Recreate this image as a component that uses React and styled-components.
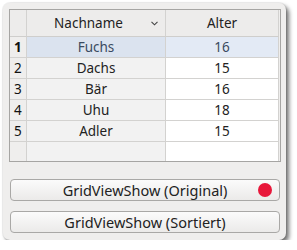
import React from "react";
import styled, { createGlobalStyle } from "styled-components";

const Global = createGlobalStyle`
  html, body { margin: 0; padding: 0; background: #ffffff; }
  body { font-family: "Noto Sans", "DejaVu Sans", sans-serif; }
`;

const Page = styled.div`
  padding: 3px 0 0 3px;
`;

const Window = styled.div`
  width: 283px;
  height: 237px;
  box-sizing: border-box;
  background: #efeeed;
  border-radius: 7px;
  box-shadow: 0 0 0 1px rgba(0,0,0,0.06), 3px 3px 4px rgba(0,0,0,0.55);
  padding: 6px 6px 0 6px;
  display: flex;
  flex-direction: column;
`;

const Table = styled.div`
  width: 272px;
  height: 153px;
  box-sizing: border-box;
  border: 1px solid #a6a5a3;
  background: #f2f1f0;
  display: grid;
  grid-template-columns: 17px 139px 113px 1px;
  grid-template-rows: 27px repeat(5, 21px) 1fr;
`;

const Head = styled.div`
  background: #edeceb;
  border-right: 1px solid #d3d2d0;
  border-bottom: 1px solid #cfcecc;
  display: flex;
  align-items: center;
  justify-content: center;
  position: relative;
  padding-right: ${p => (p.$sort ? "15px" : "0")};
  font-size: 13.5px;
  color: #222;
`;

const Sort = styled.svg`
  position: absolute;
  right: 7px;
  top: 11px;
`;

const RowHead = styled.div`
  background: #efeeed;
  border-right: 1px solid #d3d2d0;
  border-bottom: 1px solid #d3d2d0;
  display: flex;
  align-items: center;
  padding-left: 4px;
  font-size: 13.5px;
  font-weight: ${p => (p.$bold ? 700 : 400)};
  color: #111;
`;

const Cell = styled.div`
  background: ${p => (p.$sel ? (p.$sorted ? "#dbe3ef" : "#e3eaf5") : p.$sorted ? "#f2f2f2" : "#ffffff")};
  border-right: 1px solid #d3d2d0;
  border-bottom: 1px solid #d3d2d0;
  display: flex;
  align-items: center;
  justify-content: center;
  font-size: 13.5px;
  color: ${p => (p.$sel ? "#3a4a60" : "#222")};
`;

const Filler = styled.div`
  background: #efeeed;
`;

const EmptyHead = styled.div`
  background: #efeeed;
  border-right: 1px solid #d3d2d0;
`;

const EmptyCell = styled.div`
  background: ${p => (p.$sorted ? "#f2f2f2" : "#ffffff")};
  border-right: 1px solid #d3d2d0;
`;

const Buttons = styled.div`
  display: flex;
  flex-direction: column;
  gap: 10px;
  margin-top: 17px;
  padding-left: 1px;
`;

const Button = styled.button`
  width: 270px;
  height: 22px;
  box-sizing: border-box;
  border: 1px solid #a9a8a6;
  border-radius: 4px;
  background: linear-gradient(#fbfbfb, #ebeae9);
  font-family: "Noto Sans", "DejaVu Sans", sans-serif;
  font-size: 14.5px;
  color: #222;
  padding: 0;
  position: relative;
  display: flex;
  align-items: center;
  justify-content: center;
`;

const Dot = styled.span`
  position: absolute;
  right: 7px;
  top: 3px;
  width: 14px;
  height: 14px;
  border-radius: 50%;
  background: #e8173a;
`;

const rows = [
  ["Fuchs", 16],
  ["Dachs", 15],
  ["Bär", 16],
  ["Uhu", 18],
  ["Adler", 15],
];

export default function App() {
  return (
    <>
      <Global />
      <Page>
        <Window>
          <Table>
            <Head />
            <Head $sort>
              Nachname
              <Sort width="7" height="5" viewBox="0 0 7 5">
                <path d="M0.5 0.8 L3.5 3.8 L6.5 0.8" fill="none" stroke="#444" strokeWidth="1.1" />
              </Sort>
            </Head>
            <Head>Alter</Head>
            <Filler />
            {rows.map(([name, age], i) => (
              <React.Fragment key={name}>
                <RowHead $bold={i === 0}>{i + 1}</RowHead>
                <Cell $sorted $sel={i === 0}>{name}</Cell>
                <Cell $sel={i === 0}>{age}</Cell>
                <Filler />
              </React.Fragment>
            ))}
            <EmptyHead />
            <EmptyCell $sorted />
            <EmptyCell />
            <Filler />
          </Table>
          <Buttons>
            <Button>
              GridViewShow (Original)
              <Dot />
            </Button>
            <Button>GridViewShow (Sortiert)</Button>
          </Buttons>
        </Window>
      </Page>
    </>
  );
}
